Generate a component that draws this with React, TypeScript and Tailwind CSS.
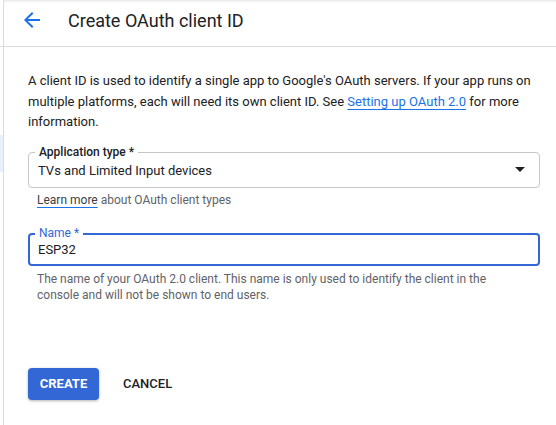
import React from 'react';

const ArrowBack: React.FC<{ className?: string }> = ({ className }) => (
  <svg viewBox="0 0 24 24" className={className} fill="currentColor" aria-hidden="true">
    <path d="M20 11H7.83l5.59-5.59L12 4l-8 8 8 8 1.41-1.41L7.83 13H20v-2z" />
  </svg>
);

export default function App() {
  return (
    <div className="flex min-h-[425px] w-[556px] bg-white text-[#202124] font-['Roboto',_'Liberation_Sans',_sans-serif]">
      {/* left rail edge */}
      <div className="flex w-[3px] flex-col">
        <div className="h-[47px] border-b border-[#dadce0]" />
        <div className="mt-[88px] h-[37px] bg-[#e8f0fe]" />
      </div>

      <div className="flex flex-1 flex-col border-l border-[#dadce0]">
        <header className="flex h-[47px] items-center border-b border-[#dadce0] shadow-[inset_0_3px_3px_-2px_rgba(0,0,0,0.12)]">
          <button className="ml-[16px] mt-[-6px] text-[#1a73e8]" aria-label="Back">
            <ArrowBack className="h-6 w-6" />
          </button>
          <h1 className="ml-[24px] mt-[-6px] text-[18px] font-normal">Create OAuth client ID</h1>
        </header>

        <main className="flex flex-col pl-[24px] pr-[16px] pt-[24px]">
          <p className="text-[13px] leading-[20.5px]">
            A client ID is used to identify a single app to Google's OAuth servers. If your app runs on
            multiple platforms, each will need its own client ID. See{' '}
            <a className="text-[#1a73e8] underline decoration-[#1a73e8] underline-offset-[3px]">Setting up OAuth 2.0</a>{' '}
            for more information.
          </p>

          <div className="relative mt-[19px] flex h-[36px] items-center rounded-[4px] border border-[#c4c7c5] pl-[9px] pr-[14px]">
            <span className="absolute left-[6px] top-[-9px] bg-white px-[4px] text-[12px] font-medium leading-4 text-[#202124]">
              Application type *
            </span>
            <span className="mt-[2px] flex-1 text-[13px]">TVs and Limited Input devices</span>
            <svg viewBox="0 0 10 5" className="h-[5px] w-[10px]" aria-hidden="true">
              <path d="M0 0l5 5 5-5z" fill="#202124" />
            </svg>
          </div>

          <p className="mt-[4px] pl-[9px] text-[12px] leading-4 text-[#5f6368]">
            <a className="text-[#3c4043] underline decoration-[#1a73e8] underline-offset-[3px]">Learn more</a> about OAuth
            client types
          </p>

          <div className="relative mt-[25px] flex h-[33px] items-center rounded-[4px] border-2 border-[#3367d6] pl-[8px]">
            <span className="absolute left-[5px] top-[-10px] bg-white px-[4px] text-[12px] leading-4 text-[#3367d6]">
              Name *
            </span>
            <span className="mt-[1px] text-[13px]">ESP32</span>
          </div>

          <p className="mt-[5px] pl-[9px] pr-[40px] text-[12px] leading-4 text-[#5f6368]">
            The name of your OAuth 2.0 client. This name is only used to identify the client in the console and will
            not be shown to end users.
          </p>

          <div className="mt-[65px] flex items-center gap-[24px]">
            <button className="h-[32px] w-[71px] rounded-[4px] bg-[#3367d6] text-[13px] font-bold text-white shadow-[0_1px_3px_rgba(0,0,0,0.3)]">
              CREATE
            </button>
            <button className="text-[13px] font-medium text-[#202124]">CANCEL</button>
          </div>
        </main>
      </div>
    </div>
  );
}
